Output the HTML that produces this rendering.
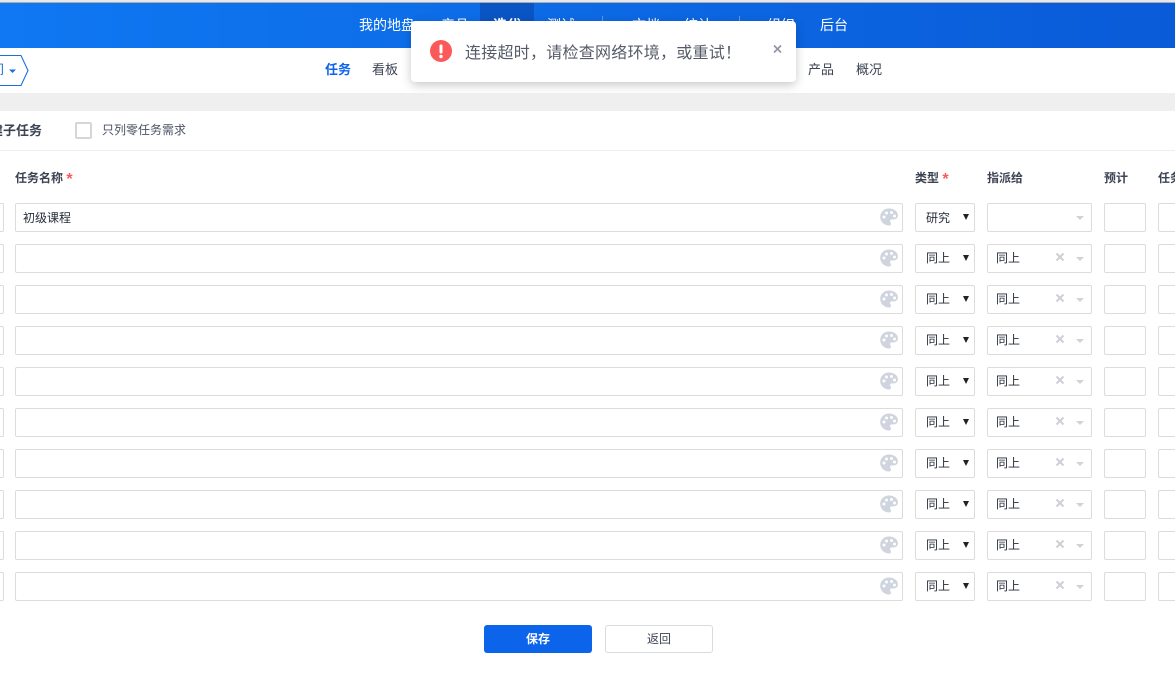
<!DOCTYPE html>
<html lang="zh-CN">
<head>
<meta charset="utf-8">
<title>任务</title>
<style>
html,body{margin:0;padding:0}
body{width:1175px;height:675px;overflow:hidden;background:#fff;position:relative;font-family:"Liberation Sans","WenQuanYi Zen Hei","Noto Sans CJK SC",sans-serif;font-size:12px;color:#3c4353}
.a{position:absolute;white-space:nowrap}
#top{left:0;top:0;width:1175px;height:3px;background:linear-gradient(#e8e8e8 0,#e8e8e8 2px,#a9abae 2px,#a9abae 3px)}
#nav{left:0;top:3px;width:1175px;height:45px;background:linear-gradient(90deg,#0f78f2,#0a5bd8)}
.n{top:16px;font-size:14px;line-height:18px;color:#fff}
.d{top:16px;width:1px;height:16px;background:#5f98e8}
.s{top:61px;font-size:13px;line-height:18px;color:#3c4353}
.row{position:absolute;left:0;width:1175px;height:29px}
.b{position:absolute;top:0;height:27px;border:1px solid #dcdcdc;border-radius:2px;background:#fff}
.pal{position:absolute;left:880px;top:5px;width:18px;height:18px}
.t{position:absolute;top:6px;line-height:16px;font-size:12px;color:#252c3a}
.tri{position:absolute;left:963px;top:11px;width:0;height:0;border-left:3.500px solid transparent;border-right:3.500px solid transparent;border-top:6px solid #222}
.c{position:absolute;left:1076px;top:13px;width:0;height:0;border-left:4.500px solid transparent;border-right:4.500px solid transparent;border-top:4.500px solid #d0d3d8}
.x{position:absolute;left:1055px;top:8px;width:10px;height:10px}
.h{top:170px;font-size:12px;font-weight:bold;line-height:17px;color:#3c4353}
.st{color:#fb5a5a;font-weight:bold;font-size:16px;line-height:0;position:relative;top:2px}
</style>
</head>
<body>
<svg width="0" height="0" style="position:absolute">
<symbol id="pl" viewBox="0 0 18 18"><path fill="#cfd4de" d="M9 0.500C4 0.500 0.200 4.200 0.200 9c0 4.700 4 8.500 8.800 8.500 1.300 0 2-.8 2-1.800 0-1.300-1-1.600-1-2.700 0-.9.700-1.600 1.700-1.600h2.200c2.300 0 4-1.600 4-4C18 3.400 13.800.5 9 .5z"/><circle cx="4" cy="9" r="1.500" fill="#fff"/><circle cx="6.500" cy="5" r="1.500" fill="#fff"/><circle cx="11.500" cy="4.500" r="1.500" fill="#fff"/><circle cx="14.500" cy="8" r="1.500" fill="#fff"/></symbol>
<symbol id="xx" viewBox="0 0 10 10"><path d="M1.500 1.500L8.500 8.500M8.500 1.500L1.500 8.500" stroke="#ccd0d6" stroke-width="2" fill="none"/></symbol>
</svg>

<div class="a" id="top"></div>
<div class="a" id="nav"></div>
<div class="a" style="left:480px;top:3px;width:54px;height:45px;background:#0a55c4"></div>
<div class="a n" style="left:359px">我的地盘</div>
<div class="a n" style="left:441px">产品</div>
<div class="a n" style="left:493px;font-weight:bold">迭代</div>
<div class="a n" style="left:547px">测试</div>
<div class="a d" style="left:602px"></div>
<div class="a n" style="left:632px">文档</div>
<div class="a n" style="left:684px">统计</div>
<div class="a d" style="left:739px"></div>
<div class="a n" style="left:767px">组织</div>
<div class="a n" style="left:820px">后台</div>

<svg class="a" style="left:0;top:54px" width="30" height="34" viewBox="0 0 30 34"><path d="M0 1.500H21L28 16.500 21 31.500H0" fill="#fff" stroke="#1a6fe0" stroke-width="1.100"/><path d="M9 15.500h7l-3.500 3.500z" fill="#1a6fe0"/></svg>
<div class="a" style="left:-9px;top:61px;font-size:13px;line-height:18px;color:#1a6fe0">间</div>
<div class="a s" style="left:325px;color:#0c64eb;font-weight:bold">任务</div>
<div class="a s" style="left:372px">看板</div>
<div class="a s" style="left:808px">产品</div>
<div class="a s" style="left:856px">概况</div>

<div class="a" style="left:0;top:93px;width:1175px;height:18px;background:#efefef"></div>
<div class="a" style="left:-10px;top:122px;font-size:13px;line-height:17px;font-weight:bold;color:#3c4353">建子任务</div>
<div class="a" style="left:75px;top:122px;width:13px;height:13px;border:2px solid #d6d6d6;border-radius:2px;background:#fff"></div>
<div class="a" style="left:102px;top:122px;font-size:12px;line-height:17px;color:#4a5160">只列零任务需求</div>
<div class="a" style="left:0;top:150px;width:1175px;height:1px;background:#eeeeee"></div>

<div class="a h" style="left:15px">任务名称 <span class="st">*</span></div>
<div class="a h" style="left:915px">类型 <span class="st">*</span></div>
<div class="a h" style="left:987px">指派给</div>
<div class="a h" style="left:1104px">预计</div>
<div class="a h" style="left:1158px">任务描述</div>

<div class="row" style="top:203px"><div class="b" style="left:-20px;width:22px"></div><div class="b" style="left:15px;width:886px"></div><div class="t" style="left:23px;top:7px">初级课程</div><svg class="pal"><use href="#pl"/></svg><div class="b" style="left:915px;width:58px"></div><div class="t" style="left:926px;top:7px">研究</div><div class="tri"></div><div class="b" style="left:987px;width:103px"></div><div class="c"></div><div class="b" style="left:1104px;width:40px"></div><div class="b" style="left:1158px;width:40px"></div></div>
<div class="row" style="top:244px"><div class="b" style="left:-20px;width:22px"></div><div class="b" style="left:15px;width:886px"></div><svg class="pal"><use href="#pl"/></svg><div class="b" style="left:915px;width:58px"></div><div class="t" style="left:926px">同上</div><div class="tri"></div><div class="b" style="left:987px;width:103px"></div><div class="t" style="left:996px">同上</div><svg class="x"><use href="#xx"/></svg><div class="c"></div><div class="b" style="left:1104px;width:40px"></div><div class="b" style="left:1158px;width:40px"></div></div>
<div class="row" style="top:285px"><div class="b" style="left:-20px;width:22px"></div><div class="b" style="left:15px;width:886px"></div><svg class="pal"><use href="#pl"/></svg><div class="b" style="left:915px;width:58px"></div><div class="t" style="left:926px">同上</div><div class="tri"></div><div class="b" style="left:987px;width:103px"></div><div class="t" style="left:996px">同上</div><svg class="x"><use href="#xx"/></svg><div class="c"></div><div class="b" style="left:1104px;width:40px"></div><div class="b" style="left:1158px;width:40px"></div></div>
<div class="row" style="top:326px"><div class="b" style="left:-20px;width:22px"></div><div class="b" style="left:15px;width:886px"></div><svg class="pal"><use href="#pl"/></svg><div class="b" style="left:915px;width:58px"></div><div class="t" style="left:926px">同上</div><div class="tri"></div><div class="b" style="left:987px;width:103px"></div><div class="t" style="left:996px">同上</div><svg class="x"><use href="#xx"/></svg><div class="c"></div><div class="b" style="left:1104px;width:40px"></div><div class="b" style="left:1158px;width:40px"></div></div>
<div class="row" style="top:367px"><div class="b" style="left:-20px;width:22px"></div><div class="b" style="left:15px;width:886px"></div><svg class="pal"><use href="#pl"/></svg><div class="b" style="left:915px;width:58px"></div><div class="t" style="left:926px">同上</div><div class="tri"></div><div class="b" style="left:987px;width:103px"></div><div class="t" style="left:996px">同上</div><svg class="x"><use href="#xx"/></svg><div class="c"></div><div class="b" style="left:1104px;width:40px"></div><div class="b" style="left:1158px;width:40px"></div></div>
<div class="row" style="top:408px"><div class="b" style="left:-20px;width:22px"></div><div class="b" style="left:15px;width:886px"></div><svg class="pal"><use href="#pl"/></svg><div class="b" style="left:915px;width:58px"></div><div class="t" style="left:926px">同上</div><div class="tri"></div><div class="b" style="left:987px;width:103px"></div><div class="t" style="left:996px">同上</div><svg class="x"><use href="#xx"/></svg><div class="c"></div><div class="b" style="left:1104px;width:40px"></div><div class="b" style="left:1158px;width:40px"></div></div>
<div class="row" style="top:449px"><div class="b" style="left:-20px;width:22px"></div><div class="b" style="left:15px;width:886px"></div><svg class="pal"><use href="#pl"/></svg><div class="b" style="left:915px;width:58px"></div><div class="t" style="left:926px">同上</div><div class="tri"></div><div class="b" style="left:987px;width:103px"></div><div class="t" style="left:996px">同上</div><svg class="x"><use href="#xx"/></svg><div class="c"></div><div class="b" style="left:1104px;width:40px"></div><div class="b" style="left:1158px;width:40px"></div></div>
<div class="row" style="top:490px"><div class="b" style="left:-20px;width:22px"></div><div class="b" style="left:15px;width:886px"></div><svg class="pal"><use href="#pl"/></svg><div class="b" style="left:915px;width:58px"></div><div class="t" style="left:926px">同上</div><div class="tri"></div><div class="b" style="left:987px;width:103px"></div><div class="t" style="left:996px">同上</div><svg class="x"><use href="#xx"/></svg><div class="c"></div><div class="b" style="left:1104px;width:40px"></div><div class="b" style="left:1158px;width:40px"></div></div>
<div class="row" style="top:531px"><div class="b" style="left:-20px;width:22px"></div><div class="b" style="left:15px;width:886px"></div><svg class="pal"><use href="#pl"/></svg><div class="b" style="left:915px;width:58px"></div><div class="t" style="left:926px">同上</div><div class="tri"></div><div class="b" style="left:987px;width:103px"></div><div class="t" style="left:996px">同上</div><svg class="x"><use href="#xx"/></svg><div class="c"></div><div class="b" style="left:1104px;width:40px"></div><div class="b" style="left:1158px;width:40px"></div></div>
<div class="row" style="top:572px"><div class="b" style="left:-20px;width:22px"></div><div class="b" style="left:15px;width:886px"></div><svg class="pal"><use href="#pl"/></svg><div class="b" style="left:915px;width:58px"></div><div class="t" style="left:926px">同上</div><div class="tri"></div><div class="b" style="left:987px;width:103px"></div><div class="t" style="left:996px">同上</div><svg class="x"><use href="#xx"/></svg><div class="c"></div><div class="b" style="left:1104px;width:40px"></div><div class="b" style="left:1158px;width:40px"></div></div>

<div class="a" style="left:484px;top:625px;width:108px;height:28px;background:#0c64eb;border-radius:3px;color:#fff;font-weight:bold;font-size:12px;line-height:28px;text-align:center">保存</div>
<div class="a" style="left:605px;top:625px;width:106px;height:26px;border:1px solid #d8dbe2;border-radius:3px;color:#3c4353;font-size:12px;line-height:26px;text-align:center">返回</div>

<div class="a" style="left:411px;top:21px;width:385px;height:61px;background:#fff;border-radius:4px;box-shadow:0 3px 10px rgba(0,0,0,.22)"></div>
<svg class="a" style="left:430px;top:40px" width="22" height="22" viewBox="0 0 22 22"><circle cx="11" cy="11" r="11" fill="#fb5a5a"/><rect x="9.500" y="4.500" width="3" height="9" rx="1.200" fill="#fff"/><circle cx="11" cy="16.500" r="1.700" fill="#fff"/></svg>
<div class="a" style="left:465px;top:43px;font-size:16px;line-height:21px;letter-spacing:.25px;color:#555b68">连接超时，请检查网络环境，或重试！</div>
<svg class="a" style="left:773px;top:44px" width="9" height="10" viewBox="0 0 9 10"><path d="M1 1.500L8 8.500M8 1.500L1 8.500" stroke="#8f95a3" stroke-width="1.600" fill="none"/></svg>
</body>
</html>
